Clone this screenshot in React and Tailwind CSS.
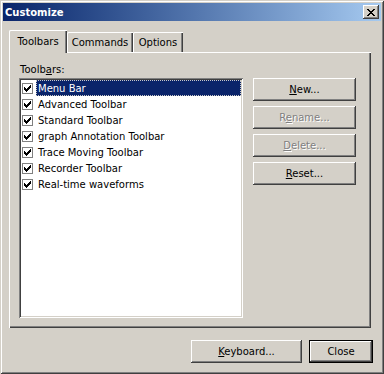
import React from "react";

const raised =
  "shadow-[inset_-1px_-1px_#404040,inset_1px_1px_#ffffff,inset_-2px_-2px_#808080,inset_2px_2px_#d4d0c8]";

function Btn({ children, disabled, className = "" }) {
  return (
    <div
      className={`flex items-center justify-center bg-[#d4d0c8] ${raised} ${
        disabled ? "text-[#808080] [text-shadow:1px_1px_0_#ffffff]" : "text-black"
      } ${className}`}
    >
      {children}
    </div>
  );
}

const checkRows = [
  [6, 1],
  [5, 2],
  [0, 1, 4, 3],
  [0, 2, 3, 3],
  [0, 5],
  [1, 3],
  [2, 1],
];

function Check() {
  return (
    <div className="w-[11px] h-[11px] shrink-0 border border-[#808080] bg-white flex items-center justify-center">
      <svg width="7" height="7" viewBox="0 0 7 7" shapeRendering="crispEdges">
        {checkRows.map((r, y) => {
          const rects = [];
          for (let k = 0; k < r.length; k += 2) {
            rects.push(<rect key={k} x={r[k]} y={y} width={r[k + 1]} height="1" fill="#000" />);
          }
          return rects;
        })}
      </svg>
    </div>
  );
}

const items = [
  "Menu Bar",
  "Advanced Toolbar",
  "Standard Toolbar",
  "graph Annotation Toolbar",
  "Trace Moving Toolbar",
  "Recorder Toolbar",
  "Real-time waveforms",
];

const tabShadow =
  "shadow-[inset_1px_0_#ffffff,inset_0_1px_#ffffff,inset_-1px_0_#404040,inset_-2px_0_#808080]";

export default function App() {
  return (
    <div
      className="w-[384px] h-[374px] bg-[#d4d0c8] p-[3px] shadow-[inset_1px_1px_#d4d0c8,inset_-1px_-1px_#404040,inset_2px_2px_#ffffff,inset_-2px_-2px_#808080] text-[10px] leading-[13px] text-black flex flex-col"
      style={{ fontFamily: '"DejaVu Sans", Verdana, sans-serif' }}
    >
      {/* Title bar */}
      <div className="h-[18px] shrink-0 flex items-center justify-between pl-[2px] pr-[2px] bg-gradient-to-r from-[#0a246a] to-[#a6caf0]">
        <span className="font-bold text-white text-[10px]">Customize</span>
        <div className={`w-[16px] h-[14px] bg-[#d4d0c8] flex items-center justify-center ${raised}`}>
          <svg width="8" height="7" viewBox="0 0 8 7" shapeRendering="crispEdges">
            <path
              d="M0 0h2v1h1v1h2v-1h1v-1h2v1h-1v1h-1v1h-1v1h1v1h1v1h1v1h-2v-1h-1v-1h-2v1h-1v1h-2v-1h1v-1h1v-1h1v-1h-1v-1h-1v-1h-1z"
              fill="#000"
            />
          </svg>
        </div>
      </div>

      {/* Body */}
      <div className="flex flex-col pl-[6px] pt-[9px]">
        {/* Tabs */}
        <div className="flex items-end h-[22px]">
          <div className={`relative z-10 -mb-px w-[58px] h-[23px] bg-[#d4d0c8] rounded-tl-[2px] ${tabShadow} flex items-center justify-center pb-[1px]`}>
            Toolbars
          </div>
          <div className={`w-[66px] h-[20px] bg-[#d4d0c8] rounded-tl-[2px] ${tabShadow} flex items-center justify-center pt-[1px]`}>
            Commands
          </div>
          <div className={`w-[50px] h-[20px] bg-[#d4d0c8] rounded-tl-[2px] ${tabShadow} flex items-center justify-center pt-[1px]`}>
            Options
          </div>
        </div>

        {/* Panel */}
        <div className="w-[362px] h-[276px] bg-[#d4d0c8] shadow-[inset_1px_1px_#ffffff,inset_-1px_-1px_#404040,inset_-2px_-2px_#808080] pt-[11px] pl-[10px] flex flex-col">
          <div className="h-[13px] ml-[1px] mb-[2px]">
            Toolb<span className="underline">a</span>rs:
          </div>
          <div className="flex">
            <div className="w-[224px] h-[240px] bg-white p-[2px] shadow-[inset_1px_1px_#808080,inset_-1px_-1px_#ffffff,inset_2px_2px_#404040,inset_-2px_-2px_#d4d0c8]">
              {items.map((t, i) => (
                <div key={t} className="h-[16px] flex items-center pl-[1px]">
                  <Check />
                  <div
                    className={`ml-[3px] flex-1 h-[16px] flex items-center pl-[1px] border border-dotted ${
                      i === 0
                        ? "bg-[#0a246a] text-white border-[#c8c8c8]"
                        : "border-transparent"
                    }`}
                  >
                    {t}
                  </div>
                </div>
              ))}
            </div>
            <div className="ml-[10px] flex flex-col gap-[5px]">
              <Btn className="w-[103px] h-[23px]">
                <span>
                  <span className="underline">N</span>ew...
                </span>
              </Btn>
              <Btn disabled className="w-[103px] h-[23px]">
                <span>
                  R<span className="underline">e</span>name...
                </span>
              </Btn>
              <Btn disabled className="w-[103px] h-[23px]">
                <span>
                  <span className="underline">D</span>elete...
                </span>
              </Btn>
              <Btn className="w-[103px] h-[23px]">
                <span>
                  <span className="underline">R</span>eset...
                </span>
              </Btn>
            </div>
          </div>
        </div>
      </div>

      {/* Bottom buttons */}
      <div className="flex justify-end gap-[7px] pr-[8px] mt-[12px]">
        <Btn className="w-[111px] h-[23px]">
          <span>
            <span className="underline">K</span>eyboard...
          </span>
        </Btn>
        <div className="w-[64px] h-[23px] border border-black">
          <Btn className="w-full h-full">Close</Btn>
        </div>
      </div>
    </div>
  );
}
